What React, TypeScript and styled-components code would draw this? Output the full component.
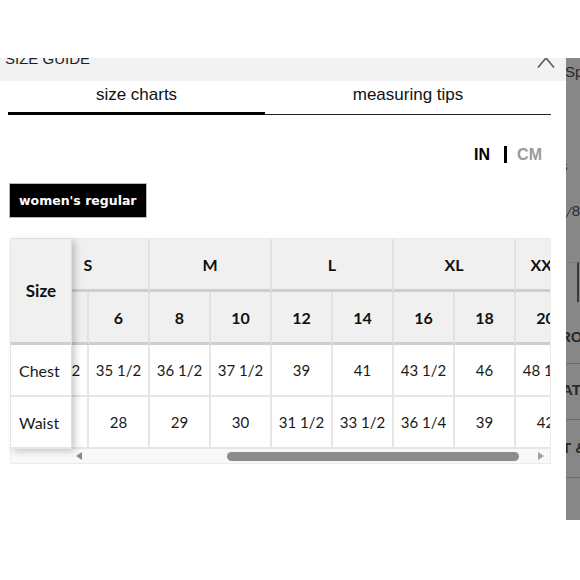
import { useLayoutEffect, useRef } from 'react';
import styled, { createGlobalStyle } from 'styled-components';

const GlobalStyle = createGlobalStyle`
  html, body { margin: 0; padding: 0; background: #ffffff; }
  body { font-family: "Liberation Sans", Arial, sans-serif; color: #111111; }
  * { box-sizing: border-box; }
`;

type SizeGroup = { label: string; sizes: string[] };

const groups: SizeGroup[] = [
  { label: 'XXS', sizes: ['00'] },
  { label: 'XS', sizes: ['0', '2'] },
  { label: 'S', sizes: ['4', '6'] },
  { label: 'M', sizes: ['8', '10'] },
  { label: 'L', sizes: ['12', '14'] },
  { label: 'XL', sizes: ['16', '18'] },
  { label: 'XXL', sizes: ['20'] },
];

const measurements: { name: string; values: string[] }[] = [
  {
    name: 'Chest',
    values: ['31 1/2', '32 1/2', '33 1/2', '34 1/2', '35 1/2', '36 1/2', '37 1/2', '39', '41', '43 1/2', '46', '48 1/2'],
  },
  {
    name: 'Waist',
    values: ['24', '25', '26', '27', '28', '29', '30', '31 1/2', '33 1/2', '36 1/4', '39', '42'],
  },
];

const COL_W = 61;
const VIEW_W = 478;
const SCROLL_LEFT = 227;
const TRACK_W = 447;

const Page = styled.div`
  width: 580px;
  height: 580px;
  overflow: hidden;
  padding-top: 58px;
  display: flex;
  align-items: flex-start;
`;

const Modal = styled.div`
  width: 566px;
  flex: none;
  background: #ffffff;
`;

const Header = styled.header`
  height: 23px;
  background: #f2f2f2;
  overflow: hidden;
  display: flex;
  justify-content: space-between;
  align-items: flex-start;
  padding: 0 11px 0 5px;
`;

const Title = styled.h2`
  margin: -8px 0 0;
  font-size: 15px;
  line-height: 18px;
  font-weight: 400;
  text-transform: uppercase;
  color: #1e1e1e;
`;

const Close = styled.button`
  margin-top: -10px;
  width: 18px;
  height: 20px;
  padding: 0;
  border: 0;
  background: none;
  color: #5a5a5a;
  display: flex;
`;

const Tabs = styled.div`
  display: flex;
  margin: 0 15px 0 8px;
`;

const Tab = styled.button<{ $active: boolean; $width: number }>`
  width: ${({ $width }) => $width}px;
  height: 34px;
  padding: 4px 0 0;
  border: 0;
  border-bottom: ${({ $active }) => ($active ? '3px solid #000' : '1px solid #222')};
  background: none;
  font-family: "Liberation Sans", Arial, sans-serif;
  font-size: 17px;
  line-height: 20px;
  color: #111;
  display: flex;
  justify-content: center;
  align-items: flex-start;
`;

const UnitRow = styled.div`
  margin-top: 31px;
  height: 17px;
  padding-right: 24px;
  display: flex;
  justify-content: flex-end;
  align-items: center;
`;

const Unit = styled.span<{ $active: boolean }>`
  font-size: 16px;
  font-weight: 700;
  line-height: 17px;
  color: ${({ $active }) => ($active ? '#000' : '#9a9a9a')};
`;

const UnitBar = styled.span`
  width: 3px;
  height: 17px;
  background: #000;
  margin: 0 10px 0 14px;
`;

const FitButton = styled.button`
  margin: 20px 0 0 9px;
  height: 35px;
  padding: 0 9px;
  border: 1px solid #b9b9b9;
  background: #000;
  color: #fff;
  font-family: "DejaVu Sans", Verdana, sans-serif;
  font-weight: 700;
  font-size: 12.5px;
  display: flex;
  align-items: center;
`;

const Frame = styled.div`
  margin: 20px 0 0 10px;
  width: 541px;
  border: 1px solid #ececec;
  background: #f8f8f8;
  display: flex;
  align-items: flex-start;
  font-family: Lato, "Open Sans", sans-serif;
`;

const StickyCol = styled.div`
  width: 61px;
  flex: none;
  display: grid;
  grid-template-rows: 106px 52px 52px;
  border-right: 1px solid #dedede;
  box-shadow: 3px 2px 7px rgba(0, 0, 0, 0.22);
  position: relative;
  z-index: 1;
`;

const ScrollArea = styled.div`
  width: ${VIEW_W}px;
  display: flex;
  flex-direction: column;
`;

const Scroller = styled.div`
  width: ${VIEW_W}px;
  overflow: hidden;
`;

const Grid = styled.div`
  display: grid;
  grid-template-columns: repeat(12, ${COL_W}px);
  grid-template-rows: 53px 53px 52px 52px;
  width: ${COL_W * 12}px;
`;

const HeadCell = styled.div<{ $span?: number }>`
  grid-column: span ${({ $span }) => $span ?? 1};
  background: #f0f0f0;
  border-right: 2px solid #e2e2e2;
  border-bottom: 3px solid #cecece;
  display: flex;
  align-items: center;
  justify-content: center;
  font-weight: 700;
  font-size: 16px;
  color: #111;
  white-space: nowrap;
`;

const StickyHead = styled(HeadCell)`
  border-right: 0;
  font-size: 17px;
`;

const BodyCell = styled.div`
  background: #fff;
  border-right: 2px solid #e6e6e6;
  border-bottom: 2px solid #e6e6e6;
  display: flex;
  align-items: center;
  justify-content: center;
  font-size: 15px;
  color: #1a1a1a;
  white-space: nowrap;
`;

const RowLabel = styled(BodyCell)`
  border-right: 0;
  justify-content: flex-start;
  padding-left: 8px;
  font-size: 16px;
`;

const Scrollbar = styled.div`
  height: 14px;
  display: flex;
  align-items: center;
  padding: 0 6px 0 4px;
`;

const Arrow = styled.span<{ $dir: 'left' | 'right' }>`
  width: 0;
  height: 0;
  border-top: 4px solid transparent;
  border-bottom: 4px solid transparent;
  ${({ $dir }) => ($dir === 'left' ? 'border-right: 6px solid #8a8a8a;' : 'border-left: 6px solid #a0a0a0;')}
`;

const Track = styled.div`
  flex: 1;
  margin: 0 6px;
  height: 9px;
  display: flex;
`;

const Thumb = styled.div`
  height: 9px;
  border-radius: 5px;
  background: #8c8c8c;
`;

const Backdrop = styled.div`
  flex: 1;
  height: 462px;
  background: #878787;
  overflow: hidden;
  display: flex;
  flex-direction: column;
  color: #2a2a2a;
`;

const BgText = styled.div<{ $top: number; $shift: number; $bold?: boolean }>`
  margin-top: ${({ $top }) => $top}px;
  margin-left: ${({ $shift }) => $shift}px;
  font-size: 15px;
  line-height: 15px;
  font-weight: ${({ $bold }) => ($bold ? 700 : 400)};
  white-space: nowrap;
  display: flex;
  align-items: flex-end;
`;

const BgRule = styled.div<{ $top: number }>`
  margin-top: ${({ $top }) => $top}px;
  height: 1px;
  background: #6c6c6c;
`;

const BgBox = styled.div`
  margin-top: 44px;
  height: 40px;
  border-top: 1px solid #7a7a7a;
  border-right: 2px solid #3a3a3a;
  width: 13px;
`;

const SizeTable = () => {
  const scroller = useRef<HTMLDivElement>(null);
  const sizes = groups.flatMap((g) => g.sizes);

  useLayoutEffect(() => {
    if (scroller.current) scroller.current.scrollLeft = SCROLL_LEFT;
  }, []);

  const total = COL_W * sizes.length;
  const thumbW = (TRACK_W * VIEW_W) / total;
  const thumbLeft = (SCROLL_LEFT / (total - VIEW_W)) * (TRACK_W - thumbW);

  return (
    <Frame>
      <StickyCol>
        <StickyHead>Size</StickyHead>
        {measurements.map((m) => (
          <RowLabel key={m.name}>{m.name}</RowLabel>
        ))}
      </StickyCol>
      <ScrollArea>
        <Scroller ref={scroller}>
          <Grid>
            {groups.map((g) => (
              <HeadCell key={g.label} $span={g.sizes.length}>
                {g.label}
              </HeadCell>
            ))}
            {sizes.map((s) => (
              <HeadCell key={s}>{s}</HeadCell>
            ))}
            {measurements.map((m) =>
              m.values.map((v, i) => <BodyCell key={m.name + i}>{v}</BodyCell>)
            )}
          </Grid>
        </Scroller>
        <Scrollbar>
          <Arrow $dir='left' />
          <Track>
            <Thumb style={{ marginLeft: thumbLeft, width: thumbW }} />
          </Track>
          <Arrow $dir='right' />
        </Scrollbar>
      </ScrollArea>
    </Frame>
  );
};

const App = () => (
  <>
    <GlobalStyle />
    <Page>
      <Modal>
        <Header>
          <Title>Size Guide</Title>
          <Close aria-label='close'>
            <svg width='18' height='20' viewBox='0 0 18 20' fill='none'>
              <path d='M1 0.5L17 19.5M17 0.5L1 19.5' stroke='currentColor' strokeWidth='1.6' />
            </svg>
          </Close>
        </Header>
        <Tabs>
          <Tab $active $width={257}>size charts</Tab>
          <Tab $active={false} $width={286}>measuring tips</Tab>
        </Tabs>
        <UnitRow>
          <Unit $active>IN</Unit>
          <UnitBar />
          <Unit $active={false}>CM</Unit>
        </UnitRow>
        <FitButton>women's regular</FitButton>
        <SizeTable />
      </Modal>
      <Backdrop>
        <BgText $top={6} $shift={-1}>Sp</BgText>
        <BgText $top={79} $shift={-6}>s</BgText>
        <BgText $top={30} $shift={0}>
          <svg width='6' height='14' viewBox='0 0 6 14'>
            <path d='M0 14L6 3' stroke='#2a2a2a' strokeWidth='1' />
          </svg>
          8
        </BgText>
        <BgBox />
        <BgText $top={27} $shift={-6} $bold>RO</BgText>
        <BgRule $top={19} />
        <BgText $top={18} $shift={-4} $bold>AT</BgText>
        <BgRule $top={22} />
        <BgText $top={20} $shift={-4} $bold>T &amp;</BgText>
        <BgRule $top={22} />
      </Backdrop>
    </Page>
  </>
);

export default App;
